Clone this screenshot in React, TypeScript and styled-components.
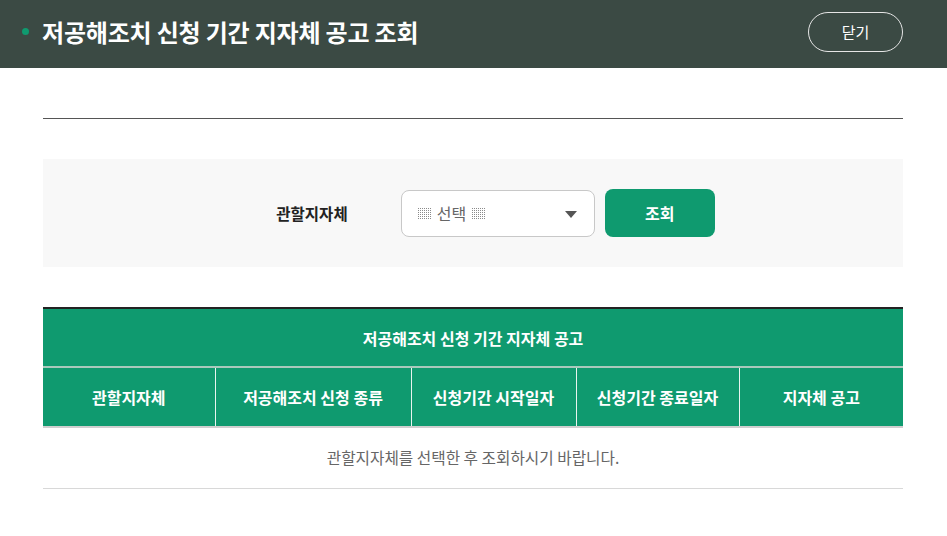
import styled, { createGlobalStyle } from "styled-components";

const GlobalStyle = createGlobalStyle`
    html, body {
        margin: 0;
        padding: 0;
        background: #fff;
        font-family: "Noto Sans CJK KR", "Noto Sans", sans-serif;
    }
    * {
        box-sizing: border-box;
    }
`;

const green = "#0f9a6f";

const Header = styled.header`
    display: flex;
    align-items: center;
    justify-content: space-between;
    height: 68px;
    padding: 0 44px 5px 22px;
    background-color: #3b4a44;
`;

const Title = styled.h1`
    display: flex;
    align-items: center;
    gap: 13px;
    margin: 0;
    font-size: 24px;
    font-weight: 700;
    color: #fff;
    letter-spacing: -0.2px;

    &::before {
        content: "";
        width: 7px;
        height: 7px;
        border-radius: 50%;
        background: ${green};
    }
`;

const CloseButton = styled.button`
    width: 95px;
    height: 40px;
    border: 1px solid #e6e6e6;
    border-radius: 20px;
    background: transparent;
    color: #fff;
    font-family: inherit;
    font-size: 15px;
    cursor: pointer;
`;

const Content = styled.main`
    padding: 50px 44px 0 43px;
`;

const Divider = styled.hr`
    margin: 0;
    border: 0;
    border-top: 1px solid #555;
`;

const SearchBox = styled.section`
    display: flex;
    align-items: center;
    justify-content: center;
    height: 108px;
    margin-top: 40px;
    padding-left: 45px;
    background: #f8f8f8;
`;

const Label = styled.span`
    margin-right: 53px;
    font-size: 15.5px;
    font-weight: 700;
    color: #222;
`;

const SelectBox = styled.div`
    position: relative;
    display: flex;
    align-items: center;
    gap: 5px;
    width: 194px;
    height: 47px;
    padding: 0 15px;
    border: 1px solid #c8c8c8;
    border-radius: 8px;
    background: #fff;
    font-size: 16px;
    color: #666;

    &::after {
        content: "";
        position: absolute;
        right: 17px;
        top: 20px;
        border-left: 6px solid transparent;
        border-right: 6px solid transparent;
        border-top: 7px solid #555;
    }
`;

/* dotted block mark on either side of the placeholder */
const Hatch = styled.span`
    display: inline-block;
    width: 15px;
    height: 12px;
    margin-top: 2px;
    background:
        repeating-linear-gradient(to right, #fff 0 1px, transparent 1px 2px),
        repeating-linear-gradient(to bottom, #8a8a8a 0 1px, transparent 1px 2px);
`;

const SearchButton = styled.button`
    width: 110px;
    height: 48px;
    margin-left: 10px;
    border: 0;
    border-radius: 8px;
    background: ${green};
    color: #fff;
    font-family: inherit;
    font-size: 16px;
    font-weight: 700;
    cursor: pointer;
`;

const Table = styled.table`
    width: 100%;
    margin-top: 40px;
    border-collapse: collapse;
    border-top: 2px solid #222;
    table-layout: fixed;
`;

const Th = styled.th`
    height: 60px;
    padding: 0;
    background: ${green};
    color: #fff;
    font-size: 16px;
    font-weight: 700;
    border-left: 1px solid #e8f4ef;
    border-bottom: 2px solid #cfcfcf;

    &:first-child {
        border-left: 0;
    }
`;

const TopTh = styled(Th)`
    height: 59px;
    border-bottom: 2px solid #a9c9bc;
`;

const Td = styled.td`
    height: 61px;
    text-align: center;
    font-size: 15.7px;
    color: #666;
    border-bottom: 1px solid #d8d8d8;
`;

const columns: { label: string; w: number }[] = [
    { label: "관할지자체", w: 172 },
    { label: "저공해조치 신청 종류", w: 196 },
    { label: "신청기간 시작일자", w: 165 },
    { label: "신청기간 종료일자", w: 163 },
    { label: "지자체 공고", w: 164 },
];

const App = () => {
    return (
        <>
            <GlobalStyle />
            <Header>
                <Title>저공해조치 신청 기간 지자체 공고 조회</Title>
                <CloseButton type="button">닫기</CloseButton>
            </Header>
            <Content>
                <Divider />
                <SearchBox>
                    <Label>관할지자체</Label>
                    <SelectBox>
                        <Hatch />
                        선택
                        <Hatch />
                    </SelectBox>
                    <SearchButton type="button">조회</SearchButton>
                </SearchBox>
                <Table>
                    <colgroup>
                        {columns.map((c) => (
                            <col key={c.label} style={{ width: c.w }} />
                        ))}
                    </colgroup>
                    <thead>
                        <tr>
                            <TopTh colSpan={5}>저공해조치 신청 기간 지자체 공고</TopTh>
                        </tr>
                        <tr>
                            {columns.map((c) => (
                                <Th key={c.label}>{c.label}</Th>
                            ))}
                        </tr>
                    </thead>
                    <tbody>
                        <tr>
                            <Td colSpan={5}>관할지자체를 선택한 후 조회하시기 바랍니다.</Td>
                        </tr>
                    </tbody>
                </Table>
            </Content>
        </>
    );
};

export default App;
